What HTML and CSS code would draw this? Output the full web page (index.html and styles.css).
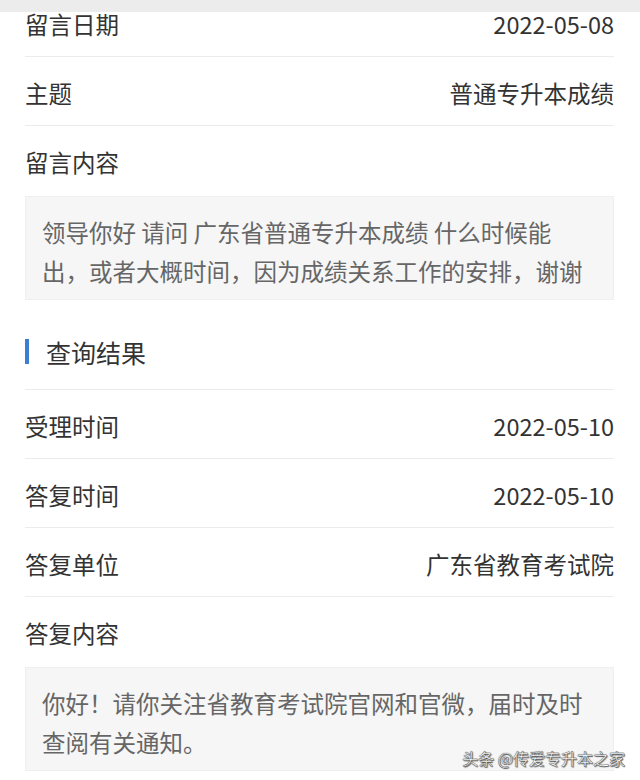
FILE: index.html
```html
<!DOCTYPE html>
<html lang="zh-CN">

<head>
    <meta charset="UTF-8">
    <meta name="viewport" content="width=device-width, initial-scale=1.0">
    <title>留言详情</title>
    <link rel="stylesheet" href="styles.css">
</head>

<body>
    <div class="topbar"></div>

    <div class="page">
        <!-- 留言信息 -->
        <div class="row first">
            <span class="label">留言日期</span>
            <span class="value">2022-05-08</span>
        </div>
        <div class="row">
            <span class="label">主题</span>
            <span class="value">普通专升本成绩</span>
        </div>
        <div class="field-title">留言内容</div>
        <div class="box">
            <p>领导你好 请问 广东省普通专升本成绩 什么时候能<br>出，或者大概时间，因为成绩关系工作的安排，谢谢</p>
        </div>

        <!-- 查询结果 -->
        <div class="section-title">
            <span class="bar"></span>
            <span>查询结果</span>
        </div>
        <div class="row">
            <span class="label">受理时间</span>
            <span class="value">2022-05-10</span>
        </div>
        <div class="row">
            <span class="label">答复时间</span>
            <span class="value">2022-05-10</span>
        </div>
        <div class="row">
            <span class="label">答复单位</span>
            <span class="value">广东省教育考试院</span>
        </div>
        <div class="field-title">答复内容</div>
        <div class="box">
            <p>你好！请你关注省教育考试院官网和官微，届时及时<br>查阅有关通知。</p>
        </div>
    </div>

    <div class="watermark">头条 @传爱专升本之家</div>
</body>

</html>
```

FILE: styles.css
```css
* {
    margin: 0;
    padding: 0;
    box-sizing: border-box;
}

body {
    width: 640px;
    height: 780px;
    overflow: hidden;
    position: relative;
    background-color: #fff;
    font-family: "Noto Sans CJK SC", "Noto Sans", sans-serif;
    color: #333;
}

.topbar {
    height: 12px;
    background-color: #ececec;
}

.page {
    padding: 0 26px 0 25px;
}

/* 普通的一行：左边标题，右边内容 */
.row {
    display: flex;
    justify-content: space-between;
    align-items: center;
    height: 69px;
    padding-top: 4px;
    border-bottom: 1px solid #ececec;
    font-size: 23.5px;
    line-height: 32px;
}

.row.first {
    height: 45px;
    padding-top: 0;
    align-items: flex-start;
    line-height: 24px;
}

.field-title {
    display: flex;
    align-items: center;
    height: 70px;
    padding-top: 1px;
    font-size: 23.5px;
    line-height: 32px;
}

/* 灰色的内容框 */
.box {
    height: 104px;
    padding: 16px 16px 0 16px;
    background-color: #f6f6f6;
    border: 1px solid #efefef;
    color: #666;
    font-size: 23.5px;
    line-height: 39px;
}

.section-title {
    display: flex;
    align-items: center;
    gap: 17px;
    margin-top: 16px;
    height: 74px;
    padding-bottom: 2px;
    border-bottom: 1px solid #ececec;
    font-size: 25px;
    line-height: 32px;
}

.section-title .bar {
    width: 4px;
    height: 25px;
    background-color: #3b7fd0;
}

/* 右下角水印 */
.watermark {
    position: absolute;
    right: 15px;
    bottom: 12px;
    font-size: 16px;
    line-height: 20px;
    color: #fff;
    -webkit-text-stroke: 0.3px #555;
    text-shadow: 0 0 1px #333, 1px 1px 1px #666;
}
```
